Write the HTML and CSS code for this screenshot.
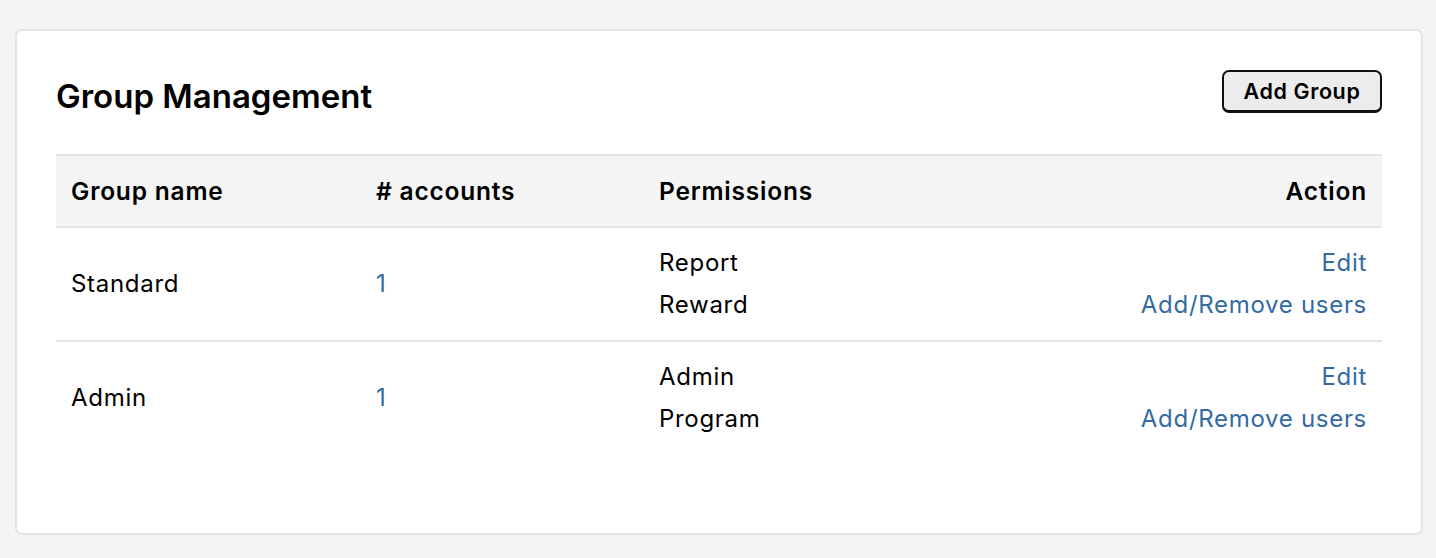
FILE: index.html
```html
<!DOCTYPE html>
<html lang="en">
<head>
<meta charset="utf-8">
<title>Group Management</title>
<link rel="stylesheet" href="styles.css">
</head>
<body>
<main class="page">
  <section class="card">
    <header class="card-head">
      <h1 class="title">Group Management</h1>
      <button class="btn" type="button">Add Group</button>
    </header>
    <table class="groups">
      <colgroup>
        <col class="c-name">
        <col class="c-count">
        <col class="c-perm">
        <col class="c-action">
      </colgroup>
      <thead>
        <tr>
          <th>Group name</th>
          <th># accounts</th>
          <th>Permissions</th>
          <th class="right">Action</th>
        </tr>
      </thead>
      <tbody>
        <tr>
          <td>Standard</td>
          <td><a class="link" href="#">1</a></td>
          <td><div>Report</div><div>Reward</div></td>
          <td class="right"><div><a class="link" href="#">Edit</a></div><div><a class="link" href="#">Add/Remove users</a></div></td>
        </tr>
        <tr>
          <td>Admin</td>
          <td><a class="link" href="#">1</a></td>
          <td><div>Admin</div><div>Program</div></td>
          <td class="right"><div><a class="link" href="#">Edit</a></div><div><a class="link" href="#">Add/Remove users</a></div></td>
        </tr>
      </tbody>
    </table>
  </section>
</main>
</body>
</html>
```

FILE: styles.css
```css
* { box-sizing: border-box; }
html, body {
  margin: 0;
  padding: 0;
  background: #f4f4f4;
  font-family: Inter, "Noto Sans", "Liberation Sans", sans-serif;
  color: #000;
}
.page {
  padding: 29px 13px 23px 15px;
}
.card {
  background: #fff;
  border: 2px solid #e4e4e4;
  border-radius: 7px;
  padding: 39px 39px 40px 39px;
  height: 506px;
}
.card-head {
  display: flex;
  justify-content: space-between;
  align-items: center;
  height: 43px;
  margin-bottom: 41px;
}
.title {
  margin: 0;
  font-size: 33px;
  font-weight: 600;
  letter-spacing: 0;
  position: relative;
  top: 4px;
}
.btn {
  width: 160px;
  height: 43px;
  background: #ececec;
  border: 2px solid #111;
  border-bottom-width: 3px;
  border-radius: 7px;
  font-family: inherit;
  font-size: 21.5px;
  font-weight: 600;
  letter-spacing: 0.6px;
  color: #000;
  padding: 0;
}
.groups {
  width: 100%;
  border-collapse: collapse;
  table-layout: fixed;
  font-size: 24px;
  letter-spacing: 0.7px;
}
.c-name { width: 305px; }
.c-count { width: 283px; }
.c-perm { width: 369px; }
.groups thead tr {
  background: #f4f4f4;
  border-top: 2px solid #e4e4e4;
  border-bottom: 2px solid #e4e4e4;
}
.groups th {
  height: 72px;
  padding: 0 15px;
  text-align: left;
  font-weight: 600;
  font-size: 24.5px;
  letter-spacing: 0.8px;
}
.groups td {
  padding: 14px 15px;
  line-height: 42px;
  vertical-align: middle;
}
.groups tbody tr + tr {
  border-top: 2px solid #e4e4e4;
}
.groups .right { text-align: right; }
.link {
  color: #336aa3;
  text-decoration: none;
}
```
